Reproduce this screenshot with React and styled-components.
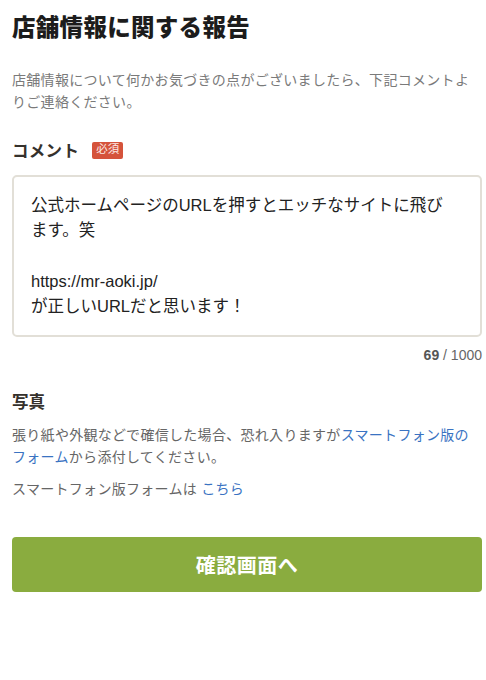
import React from "react";
import styled, { createGlobalStyle } from "styled-components";

const GlobalStyle = createGlobalStyle`
  html, body {
    margin: 0;
    padding: 0;
    background: #ffffff;
  }
  body {
    font-family: "Liberation Sans", "Noto Sans CJK JP", sans-serif;
    color: #333;
  }
  * { box-sizing: border-box; }
`;

const Page = styled.main`
  padding: 13px 4px 40px 12px;
  display: flex;
  flex-direction: column;
`;

const Title = styled.h1`
  margin: 0;
  font-size: 23.5px;
  line-height: 31px;
  font-weight: 900;
  letter-spacing: 0.3px;
  color: #1c1c1c;
`;

const Lead = styled.p`
  margin: 25px 0 0;
  font-size: 14px;
  letter-spacing: 0.3px;
  line-height: 22px;
  color: #7a7a7a;
`;

const LabelRow = styled.div`
  margin-top: 25px;
  display: flex;
  align-items: center;
  gap: 13px;
  height: 24px;
`;

const Label = styled.h2`
  margin: 0;
  font-size: 16.5px;
  font-weight: 700;
  color: #35312c;
  letter-spacing: 0.3px;
`;

const Badge = styled.span`
  display: inline-flex;
  align-items: center;
  justify-content: center;
  width: 31px;
  height: 17px;
  border-radius: 2px;
  background: #d5533b;
  color: #fbe9e5;
  font-size: 11.5px;
  line-height: 1;
`;

const CommentBox = styled.textarea`
  margin-top: 13px;
  width: 470px;
  height: 162px;
  border: 2px solid #e2dfd7;
  border-radius: 5px;
  padding: 16px 28px 0 17px;
  font-family: "Liberation Sans", "Noto Sans CJK JP", sans-serif;
  font-size: 16.5px;
  line-height: 25.25px;
  color: #222;
  resize: none;
  overflow: hidden;
  outline: none;
  background: #fff;
`;

const Counter = styled.div`
  margin-top: 8px;
  text-align: right;
  font-size: 14px;
  line-height: 20px;
  color: #666;
`;

const Count = styled.b`
  font-weight: 700;
  color: #555;
`;

const SectionTitle = styled.h2`
  margin: 25px 0 0;
  font-size: 16.5px;
  line-height: 24px;
  font-weight: 700;
  color: #35312c;
`;

const Note = styled.p`
  margin: ${(p) => p.$top || 0}px 0 0;
  font-size: 14px;
  letter-spacing: 0.3px;
  line-height: 22px;
  color: #666;
`;

const Link = styled.a`
  color: #3a73c2;
  text-decoration: none;
`;

const Submit = styled.button`
  margin-top: 37px;
  width: 470px;
  height: 55px;
  border: none;
  border-radius: 4px;
  background: #8aac3f;
  color: #fff;
  font-family: "Liberation Sans", "Noto Sans CJK JP", sans-serif;
  font-size: 20px;
  font-weight: 700;
  letter-spacing: 0.5px;
  cursor: pointer;
`;

const commentText =
  "公式ホームページのURLを押すとエッチなサイトに飛びます。笑\n\nhttps://mr-aoki.jp/\nが正しいURLだと思います！";

export default function App() {
  return (
    <>
      <GlobalStyle />
      <Page>
        <Title>店舗情報に関する報告</Title>
        <Lead>
          店舗情報について何かお気づきの点がございましたら、下記コメントよりご連絡ください。
        </Lead>
        <LabelRow>
          <Label>コメント</Label>
          <Badge>必須</Badge>
        </LabelRow>
        <CommentBox readOnly defaultValue={commentText} />
        <Counter>
          <Count>69</Count> / 1000
        </Counter>
        <SectionTitle>写真</SectionTitle>
        <Note $top={10}>
          張り紙や外観などで確信した場合、恐れ入りますが
          <Link href="#">スマートフォン版のフォーム</Link>から添付してください。
        </Note>
        <Note $top={10}>
          スマートフォン版フォームは <Link href="#">こちら</Link>
        </Note>
        <Submit type="button">確認画面へ</Submit>
      </Page>
    </>
  );
}
